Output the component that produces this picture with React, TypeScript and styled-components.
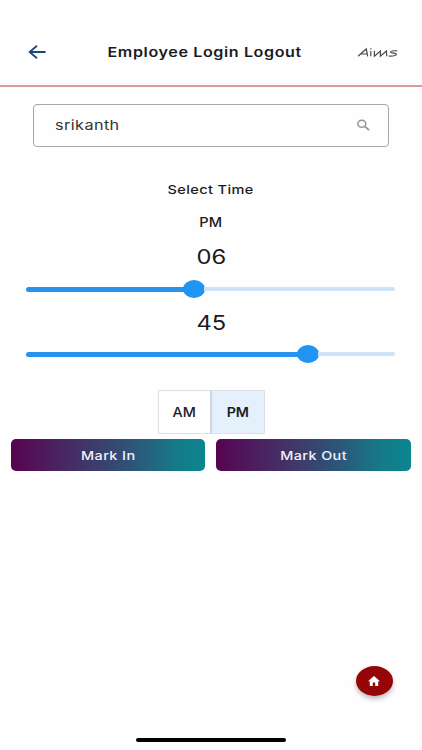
import React from "react";
import styled, { createGlobalStyle } from "styled-components";

const Global = createGlobalStyle`
  * { box-sizing: border-box; }
  html, body { margin: 0; background: #fefefe; }
  body { font-family: Inter, "Liberation Sans", sans-serif; color: #1b1b1e; overflow: hidden; }
  button { font: inherit; color: inherit; border: 0; padding: 0; }
`;

const Screen = styled.main`
  display: flex;
  flex-direction: column;
  width: 422px;
  height: 750px;
  background: #fefefe;
`;

const Label = styled.span<{
  $size: number;
  $weight?: number;
  $stretch: number;
  $space?: number;
  $origin?: string;
}>`
  display: inline-block;
  font-size: ${(p) => p.$size}px;
  font-weight: ${(p) => p.$weight ?? 400};
  letter-spacing: ${(p) => p.$space ?? 0}px;
  line-height: 20px;
  white-space: nowrap;
  transform: scaleX(${(p) => p.$stretch});
  transform-origin: ${(p) => p.$origin ?? "center"};
`;

const Header = styled.header`
  display: grid;
  grid-template-columns: 74px 1fr 74px;
  align-items: center;
  height: 87px;
  padding-top: 19px;
  border-bottom: 2px solid #da9b9d;
  flex: none;
`;

const Back = styled.button`
  display: flex;
  justify-content: center;
  background: none;
`;

const Title = styled.h1`
  margin: 0;
  font-size: 0;
  text-align: center;
  padding-right: 13px;
`;

const Logo = styled.svg`
  display: block;
  margin-left: 9px;
`;

const Search = styled.div`
  display: flex;
  align-items: center;
  justify-content: space-between;
  flex: none;
  width: 356px;
  height: 43px;
  margin: 17px 0 0 33px;
  padding: 0 18px 1px 21px;
  border: 1px solid #a6a6a6;
  border-radius: 4px;
  color: #343434;
`;

const Row = styled.div<{ $top: number }>`
  display: flex;
  justify-content: center;
  height: 20px;
  margin-top: ${(p) => p.$top}px;
  flex: none;
`;

const Slider = styled.div<{ $top: number }>`
  display: flex;
  align-items: center;
  width: 369px;
  height: 18px;
  margin: ${(p) => p.$top}px 0 0 26px;
  flex: none;
`;

const Filled = styled.div<{ $width: number }>`
  width: ${(p) => p.$width}px;
  height: 5px;
  border-radius: 3px 0 0 3px;
  background: #2793ec;
`;

const Thumb = styled.div`
  width: 22px;
  height: 18px;
  margin: 0 -1px;
  border-radius: 50%;
  background: #2094f2;
`;

const Rest = styled.div`
  flex: 1;
  height: 4px;
  border-radius: 0 2px 2px 0;
  background: #cde3f7;
`;

const Toggle = styled.div`
  display: flex;
  width: 107px;
  height: 44px;
  margin: 27px 0 0 157.5px;
  flex: none;
  border: 1px solid #dcdfe5;
`;

const Option = styled.button<{ $on?: boolean }>`
  flex: 1;
  background: ${(p) => (p.$on ? "#e4f0fc" : "#fefefe")};
  & + & { border-left: 2px solid #ced5e0; }
`;

const Actions = styled.div`
  display: flex;
  gap: 11px;
  margin: 5px 11.5px 0 11px;
  flex: none;
`;

const Action = styled.button`
  flex: 1;
  height: 32px;
  border-radius: 5px;
  color: #f0f2fa;
  background: linear-gradient(90deg, #570350 0%, #4e1b5e 18%, #423568 38%, #2d5579 62%, #177889 84%, #0a878e 100%);
`;

const Fab = styled.button`
  display: flex;
  align-items: center;
  justify-content: center;
  width: 37px;
  height: 30px;
  margin: auto 29.5px 42.5px auto;
  border-radius: 50%;
  background: #950608;
  box-shadow: 0 3px 5px rgba(0, 0, 0, 0.26);
`;

const HomeBar = styled.div`
  width: 150px;
  height: 4px;
  flex: none;
  margin: 0 0 8px 136px;
  border-radius: 2px;
  background: #000;
`;

export default function App() {
  return (
    <Screen>
      <Global />
      <Header>
        <Back aria-label="Back">
          <svg width="18" height="14" viewBox="0 0 18 14" fill="none" stroke="#1d4778" strokeWidth="1.8">
            <path d="M9 .7 1.6 7 9 13.3M1.7 7H17.5" />
          </svg>
        </Back>
        <Title><Label $size={13.2} $weight={600} $stretch={1.22} $space={0.5}>Employee Login Logout</Label></Title>
        <Logo width="42" height="12" viewBox="0 0 42 12" fill="none" stroke="#484848" strokeWidth="1.2" aria-label="Aims">
          <path d="M1 10.3 9.3 3l1.4 7.3M4.2 8h6M13.8 4.9v5.4M13.8 2.3v1.3M17.4 4.8v5.3l6-5v5.2l6-5.2.4 5.2M40.2 4.8c-4-.2-6.7.3-6.7 1.3 0 1.3 6 .8 5.8 2.4-.2 1.5-3.7 1.7-7.5 1.6" />
        </Logo>
      </Header>
      <Search>
        <Label $size={13.5} $stretch={1.2} $space={0.35} $origin="left">srikanth</Label>
        <svg width="13" height="12" viewBox="0 0 13 12" fill="none" stroke="#929292">
          <ellipse cx="4.8" cy="4.8" rx="4" ry="3.5" strokeWidth="1.4" />
          <path d="m7.8 7.4 4.3 3.7" strokeWidth="1.8" />
        </svg>
      </Search>
      <Row $top={33}><Label $size={12.3} $weight={500} $stretch={1.18} $space={0.35}>Select Time</Label></Row>
      <Row $top={13}><Label $size={12.5} $weight={500} $stretch={1.17}>PM</Label></Row>
      <Row $top={14}><Label $size={19.8} $stretch={1.2}>06</Label></Row>
      <Slider $top={13}><Filled $width={158} /><Thumb /><Rest /></Slider>
      <Row $top={15}><Label $size={19.8} $stretch={1.2}>45</Label></Row>
      <Slider $top={12}><Filled $width={272} /><Thumb /><Rest /></Slider>
      <Toggle>
        <Option><Label $size={12.5} $weight={500} $stretch={1.15}>AM</Label></Option>
        <Option $on><Label $size={12.5} $weight={600} $stretch={1.14}>PM</Label></Option>
      </Toggle>
      <Actions>
        <Action><Label $size={12.3} $weight={500} $stretch={1.17} $space={0.35}>Mark In</Label></Action>
        <Action><Label $size={12.3} $weight={500} $stretch={1.17} $space={0.35}>Mark Out</Label></Action>
      </Actions>
      <Fab aria-label="Home">
        <svg width="12" height="10" viewBox="0 0 12 10" fill="#fff">
          <path d="M6 0 0 5.2h1.8V10h3V6.4h2.4V10h3V5.2H12Z" />
        </svg>
      </Fab>
      <HomeBar />
    </Screen>
  );
}
